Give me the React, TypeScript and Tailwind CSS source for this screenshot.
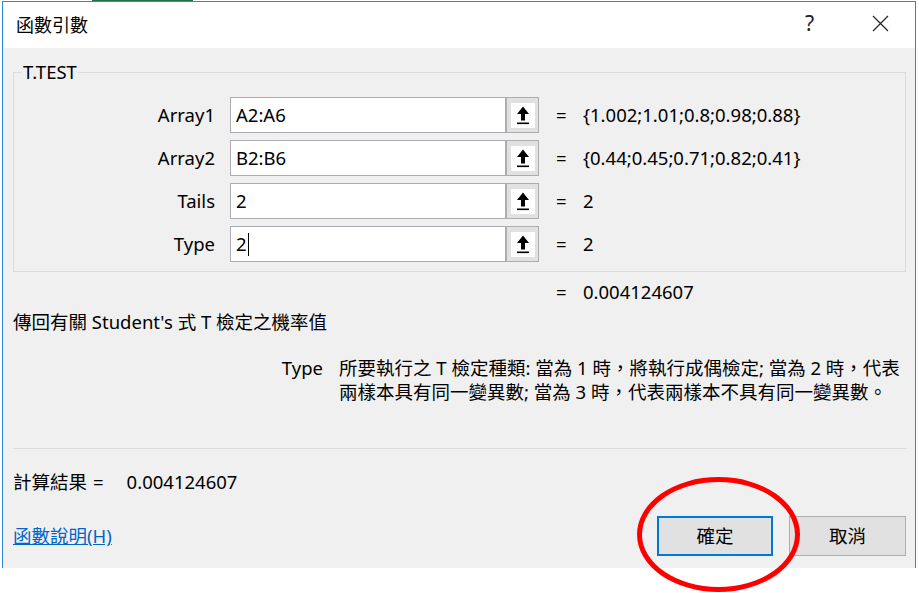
import React from "react"

const rows = [
	{ label: "Array1", value: "A2:A6", result: "{1.002;1.01;0.8;0.98;0.88}" },
	{ label: "Array2", value: "B2:B6", result: "{0.44;0.45;0.71;0.82;0.41}" },
	{ label: "Tails", value: "2", result: "2" },
	{ label: "Type", value: "2", result: "2", caret: true },
]

const RefIcon = () => (
	<svg width="14" height="19" viewBox="0 0 14 19">
		<path d="M7 0.5 L13 8 L9 8 L9 14.5 L5 14.5 L5 8 L1 8 Z" fill="#000" />
		<rect x="1" y="16.5" width="12" height="1.6" fill="#000" />
	</svg>
)

const App = () => {
	return (
		<div className="relative w-[919px] h-[593px] overflow-hidden bg-white text-[18.5px] text-black font-['Noto_Sans','Noto_Sans_CJK_TC',sans-serif]">
			<div className="flex h-[1px]">
				<div className="ml-[92px] w-[101px] bg-[#217346]" />
			</div>
			<div className="ml-[2px] w-[914px] border-x border-t border-[#2b88d8]">
				{/* title bar */}
				<div className="flex h-[46px] items-center bg-white pb-[3px] pl-[13px]">
					<span className="text-[18px] leading-none font-['Noto_Sans_CJK_TC',sans-serif]">函數引數</span>
					<span className="ml-auto text-[21px] leading-none text-[#222]">?</span>
					<svg className="ml-[58px] mr-[26px]" width="17" height="17" viewBox="0 0 17 17">
						<path d="M1 1 L16 16 M16 1 L1 16" stroke="#222" strokeWidth="1.2" />
					</svg>
				</div>

				{/* body */}
				<div className="h-[520px] overflow-hidden bg-[#f0f0f0] pl-[10px] pr-[9px]">
					<fieldset className="mt-[12px] w-[893px] border border-[#dcdcdc] px-0 pt-[13px] pb-[9px]">
						<legend className="ml-[8px] px-[1px] leading-[24px]">T.TEST</legend>
						<div className="flex flex-col gap-[7px]">
							{rows.map((r) => (
								<div key={r.label} className="flex h-[36px] items-center">
									<div className="w-[201px] text-right">{r.label}</div>
									<div className="ml-[15px] flex h-[36px] w-[276px] items-center border border-[#abadb3] bg-white pl-[5px]">
										<span>{r.value}</span>
										{r.caret && <span className="ml-[1px] h-[23px] w-[1px] bg-black" />}
									</div>
									<div className="flex h-[36px] w-[33px] items-center justify-center border border-[#adadad] bg-[#e1e1e1]">
										<div className="flex h-[25px] w-[24px] items-center justify-center bg-white">
											<RefIcon />
										</div>
									</div>
									<div className="ml-[17px] w-[27px]">=</div>
									<div className="whitespace-nowrap">{r.result}</div>
								</div>
							))}
						</div>
					</fieldset>

					<div className="mt-[8px] flex leading-[24px]">
						<div className="ml-[543px] w-[27px]">=</div>
						<div>0.004124607</div>
					</div>

					<div className="mt-[6px] leading-[24px]">傳回有關 Student's 式 T 檢定之機率值</div>

					<div className="mt-[22px] flex leading-[24px]">
						<div className="w-[310px] text-right">Type</div>
						<div className="ml-[16px] whitespace-nowrap">
							所要執行之 T 檢定種類: 當為 1 時，將執行成偶檢定; 當為 2 時，代表
							<br />
							兩樣本具有同一變異數; 當為 3 時，代表兩樣本不具有同一變異數。
						</div>
					</div>

					<div className="mt-[44px] h-[1px] w-[894px] bg-[#dcdcdc]" />

					<div className="mt-[21px] flex leading-[24px]">
						<span>計算結果</span>
						<span className="ml-[6px]">=</span>
						<span className="ml-[23px]">0.004124607</span>
					</div>

					<div className="mt-[22px] flex items-center">
						<a className="text-[#0066cc] underline leading-[24px]">函數說明(H)</a>
						<button className="ml-auto h-[40px] w-[116px] border-2 border-[#0078d7] bg-[#e1e1e1]">確定</button>
						<button className="ml-[16px] h-[40px] w-[117px] border border-[#adadad] bg-[#e1e1e1]">取消</button>
					</div>
				</div>
			</div>

			{/* red annotation circle */}
			<div className="absolute left-[637px] top-[477px] h-[115px] w-[163px] rounded-[50%] border-[5px] border-[#ff0000]" />
		</div>
	)
}

export default App
